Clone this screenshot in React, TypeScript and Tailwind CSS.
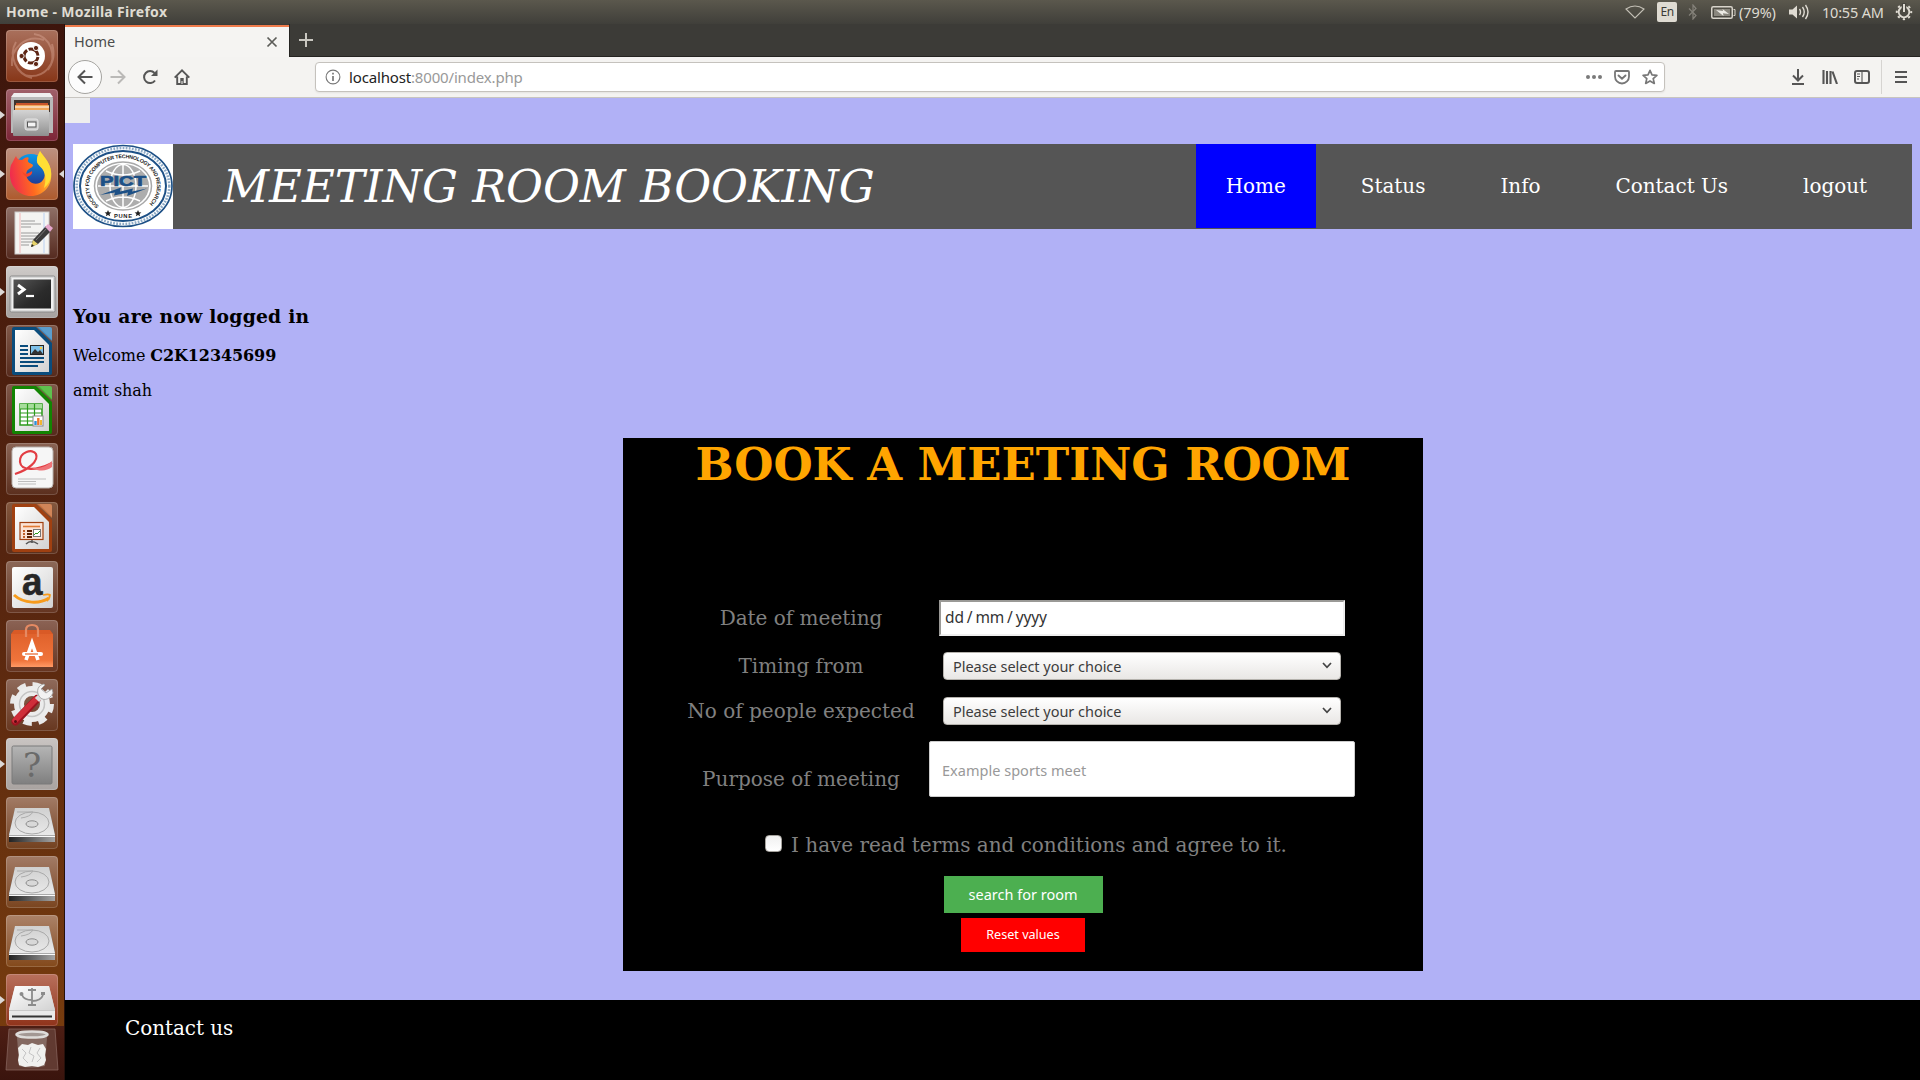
import React from "react";

const serif = "font-['DejaVu_Serif',serif]";
const sans = "font-['Noto_Sans',sans-serif]";

/* ---------- launcher artwork ---------- */

function UbuntuArt() {
  return (
    <g>
      <path d="M6 36C4 18 20 4 38 10M46 14C52 34 38 50 18 45M10 12C2 26 10 44 26 48M42 40C52 26 44 6 28 4" stroke="#d9a795" strokeWidth="2" fill="none" opacity=".45" />
      <circle cx="25" cy="26" r="14" fill="#fff" />
      <circle cx="25" cy="26" r="7" fill="none" stroke="#5e2514" strokeWidth="3" strokeDasharray="13 1.660" strokeDashoffset="-1" />
      <circle cx="15.600" cy="26" r="2.600" fill="#5e2514" stroke="#fff" strokeWidth=".9" />
      <circle cx="30" cy="18" r="2.600" fill="#5e2514" stroke="#fff" strokeWidth=".9" />
      <circle cx="30" cy="34" r="2.600" fill="#5e2514" stroke="#fff" strokeWidth=".9" />
    </g>
  );
}

function FilesArt() {
  return (
    <g>
      <path d="M5 9l3-5h36l3 5v35H5z" fill="#b9b9b9" />
      <path d="M5 8l3-4h36l3 4z" fill="#efefef" />
      <rect x="8" y="11" width="36" height="12" fill="#40342f" />
      <path d="M10 14h32v3H10z" fill="#c9552b" />
      <path d="M9 16h34v6H9z" fill="#f0a75b" />
      <path d="M9 18h34" stroke="#fff" strokeWidth="1.200" />
      <rect x="7" y="21" width="36" height="26" rx="1" fill="url(#steel)" />
      <rect x="19" y="30" width="13" height="11" rx="2" fill="#c9c9c9" stroke="#e5e5e5" />
      <rect x="21.500" y="33" width="8.500" height="5" fill="#f4f4f4" stroke="#555" />
    </g>
  );
}

function FirefoxArt() {
  return (
    <g>
      <circle cx="25" cy="23" r="17" fill="url(#ffblue)" />
      <path d="M5 17C7 14 8 11 10 8C11 11 13 12 16 12C21 8 24 9 22 12C21 15 25 15 27 17C27 20 23 20 21 23C19 27 21 32 26 35C34 38 41 31 38 23C36 18 31 18 31 13C31 8 33 5 34 3C37 8 44 14 45 24C47 38 37 48 25 48C13 48 4 38 4 27C4 23 4 20 5 17Z" fill="url(#fffire)" />
      <path d="M34 3C37 8 44 14 45 23C46 30 43 36 38 40C40 33 40 27 37 22C34 17 30 16 31 11C31 8 33 5 34 3Z" fill="#ffdf35" />
      <path d="M16 23c3 5 7 2 10 0c1 3-2 5-5 6c-3-1-4-3-5-6z" fill="#f5452b" />
    </g>
  );
}

function EditorArt() {
  return (
    <g>
      <rect x="9" y="5" width="34" height="42" fill="#f4f4f2" stroke="#ccc" />
      <path d="M14 6v40" stroke="#f4a9a9" strokeWidth=".8" />
      <path d="M38 6v40" stroke="#a9c8f4" strokeWidth=".8" />
      <path d="M15 14h14M15 17h20M15 20h10M15 26h18M15 29h18M15 32h14M15 35h12M15 38h8" stroke="#9a9a9a" />
      <path d="M25 40l2-7 13-14 5 5-13 13z" fill="#3b3b3b" />
      <path d="M25 40l2-7 5 4z" fill="#e6d36a" />
      <path d="M25 40l1-3 2 2z" fill="#222" />
      <path d="M39 20l3-3 5 4-3 4z" fill="#e5a6cc" />
      <path d="M30 33l11-12" stroke="#777" />
    </g>
  );
}

function TerminalArt() {
  return (
    <g>
      <rect x="4" y="10" width="45" height="36" rx="1.500" fill="#d9d9d9" stroke="#8a8a8a" />
      <rect x="6" y="12" width="41" height="32" fill="#f1f1f1" />
      <rect x="7.500" y="13.500" width="37.500" height="29" fill="url(#term)" />
      <path d="M12 19l6 4.500-6 4.500" stroke="#fff" strokeWidth="3" fill="none" />
      <path d="M20 30h8" stroke="#fff" strokeWidth="2.200" />
    </g>
  );
}

function DocShape({ color, fold, children }: { color: string; fold: string; children: React.ReactNode }) {
  return (
    <g>
      <path d="M8 2H30L46 18V48Q46 50 44 50H8Q6 50 6 48V4Q6 2 8 2Z" fill={color} />
      <path d="M9 5H28L43 20V47H9Z" fill="url(#paper)" />
      <path d="M31 2H44Q46 2 46 4V16Z" fill={fold} />
      <path d="M33 2H44Q46 2 46 4V15Z" fill="#fff" opacity=".15" />
      {children}
    </g>
  );
}

function WriterArt() {
  return (
    <DocShape color="#0a4c7c" fold="#3f8cc4">
      <path d="M14 21h8M14 25h8M14 29h8M14 33h24M14 37h24M14 41h18" stroke="#0a4c7c" strokeWidth="1.800" />
      <rect x="24.500" y="20.500" width="13" height="9" fill="#7cc0ea" stroke="#222" />
      <path d="M25 29l4-5 3 3 2-2 3 4z" fill="#333" />
      <circle cx="35" cy="23" r="1.300" fill="#f6c945" />
    </DocShape>
  );
}

function CalcArt() {
  return (
    <DocShape color="#128402" fold="#43b62f">
      <rect x="14" y="20" width="22" height="21" fill="#fff" stroke="#2b9a1b" strokeWidth="1.500" />
      <rect x="14" y="20" width="22" height="5" fill="#a6dd9b" />
      <path d="M14 25h22M14 29h22M14 33h22M14 37h22M21.500 20v21M28.500 20v21" stroke="#2b9a1b" strokeWidth="1.200" />
      <rect x="27" y="32" width="10" height="10" fill="#fff" stroke="#888" />
      <path d="M29.500 41v-4" stroke="#2d8fd8" strokeWidth="2.400" />
      <path d="M32.300 41v-7" stroke="#ee7429" strokeWidth="2.400" />
      <path d="M35 41v-5" stroke="#f2b632" strokeWidth="2" />
    </DocShape>
  );
}

function PdfArt() {
  return (
    <g>
      <rect x="6" y="4" width="41" height="41" rx="4" fill="#f6f6f6" stroke="#b9b2ae" />
      <path d="M9 31C22 27 33 18 30 11C27 5 13 9 14 19C15 28 30 28 46 20" stroke="#e23d43" strokeWidth="2.200" fill="none" />
      <path d="M26 25C36 26 42 22 46 18V24C41 28 34 29 26 25Z" fill="#ef7478" />
      <path d="M12 36h28M12 38.500h18M12 41h18" stroke="#bdbdbd" strokeWidth="1.200" />
    </g>
  );
}

function ImpressArt() {
  return (
    <DocShape color="#a04011" fold="#c8703c">
      <rect x="14" y="20.500" width="23" height="17" fill="#fbe3d6" stroke="#a04011" strokeWidth="1.200" />
      <path d="M17 24.500h17" stroke="#e07a35" strokeWidth="1.600" />
      <path d="M17 29h2M17 32h2M17 35h2" stroke="#c0602a" strokeWidth="2" />
      <path d="M21 29h5M21 32h5M21 35h5" stroke="#5c2205" strokeWidth="2" />
      <rect x="27.500" y="27.500" width="7" height="7" fill="#fff" stroke="#777" />
      <path d="M28 33l2-2 1 1 3-3" stroke="#2b9a1b" fill="none" />
      <path d="M20 42q5-5 12 0M26 38v3" stroke="#555" strokeWidth="1.500" fill="none" />
    </DocShape>
  );
}

function AmazonArt() {
  return (
    <g>
      <rect x="6" y="6" width="41" height="41" rx="2" fill="url(#paper)" />
      <text x="16" y="34" fontFamily="Liberation Sans" fontWeight="700" fontSize="39" textLength="20.500" lengthAdjust="spacingAndGlyphs" fill="#262626" stroke="#262626" strokeWidth=".6">a</text>
      <path d="M8 34C18 43 34 43 43 37" stroke="#f79b1c" strokeWidth="3" fill="none" />
      <path d="M37 34c4-1 6-1 7 0c0 2-1 4-3 6" stroke="#f79b1c" strokeWidth="1.800" fill="none" />
    </g>
  );
}

function SoftwareArt() {
  return (
    <g>
      <path d="M5 14h42v33H5z" fill="url(#bag)" />
      <path d="M5 14l3-4h36l3 4z" fill="#d95a26" />
      <path d="M20 17V10q0-5 6-5t6 5v7" stroke="#e58a63" strokeWidth="2.200" fill="none" />
      <path d="M20 40l6-17 6 17" stroke="#fff" strokeWidth="3.600" fill="none" />
      <path d="M18 34h17" stroke="#fff" strokeWidth="4" strokeLinecap="round" />
      <path d="M19 34h13" stroke="#e7632b" strokeWidth="1.200" />
    </g>
  );
}

function SettingsArt() {
  return (
    <g>
      <circle cx="26" cy="25" r="19.500" fill="none" stroke="#e9e9e9" strokeWidth="5" strokeDasharray="8.500 6.810" />
      <circle cx="26" cy="25" r="13" fill="none" stroke="#ececec" strokeWidth="10" />
      <circle cx="26" cy="25" r="12.500" fill="none" stroke="#c4c4c4" strokeWidth="1.500" />
      <path d="M9.500 42.500L31 20" stroke="#9c1420" strokeWidth="8" strokeLinecap="round" />
      <path d="M9 41.500L30 20" stroke="#cf2e3a" strokeWidth="5.500" strokeLinecap="round" />
      <path d="M31 21l5-5" stroke="#dcdcdc" strokeWidth="6" />
      <path d="M38 5c-6 1-8 7-5 12s10 5 14-3l-1-4-6 4-5-4 4-4z" fill="#f2f2f2" stroke="#9b9b9b" strokeWidth=".8" />
      <circle cx="9.500" cy="42.500" r="1.500" fill="#5c0a12" />
    </g>
  );
}

function UnknownArt() {
  return (
    <g>
      <rect x="6" y="8" width="40" height="38" rx="1.500" fill="url(#gray)" stroke="#7a7a7a" />
      <text x="26" y="39" textAnchor="middle" fontFamily="DejaVu Serif" fontSize="34" fill="#6a6a6a">?</text>
    </g>
  );
}

function DiskArt() {
  return (
    <g>
      <path d="M9 12H43L49 37V45H3V37Z" fill="#5a5a5a" />
      <path d="M9 11H43L49 38H3Z" fill="url(#disk)" />
      <path d="M3 38.500H49V40H3Z" fill="#fafafa" />
      <path d="M3 40H49V45H3Z" fill="url(#edge)" />
      <ellipse cx="26" cy="26" rx="17" ry="11" fill="none" stroke="#a9a9a9" />
      <ellipse cx="26" cy="27" rx="6" ry="3.200" fill="#d8d8d8" stroke="#8c8c8c" />
      <path d="M11 15h16q-3 5-12 6" stroke="#adadad" fill="none" />
    </g>
  );
}

function UsbArt() {
  return (
    <g>
      <path d="M9 12H43L49 36V46H3V36Z" fill="#c9c9c9" />
      <path d="M9 12H43L49 36H3Z" fill="url(#paper)" />
      <path d="M3 37H49V46H3Z" fill="#e9e9e9" />
      <path d="M6 41.500H46V43.500H6Z" fill="#333" />
      <path d="M26 14v17M26 26q-8 0-10-5M26 27q9 0 11-6M22 16h8M22 31h8" stroke="#8b8b8b" strokeWidth="1.800" fill="none" />
      <circle cx="15.500" cy="20" r="2" fill="#8b8b8b" />
      <rect x="35" y="18" width="4" height="3" fill="#8b8b8b" />
    </g>
  );
}

const launcher: { art: () => React.JSX.Element; tint: string; mark?: "left" | "both" }[] = [
  { art: UbuntuArt, tint: "bg-linear-to-b from-[#a9705c] to-[#873617]" },
  { art: FilesArt, tint: "bg-linear-to-b from-[#a0616a] to-[#7c2437]", mark: "left" },
  { art: FirefoxArt, tint: "bg-linear-to-b from-[#bd9180] to-[#ae5a2c]", mark: "both" },
  { art: EditorArt, tint: "bg-linear-to-b from-[#8f7068] to-[#552a1f]" },
  { art: TerminalArt, tint: "bg-linear-to-b from-[#cfcbc9] to-[#a5a19f]", mark: "left" },
  { art: WriterArt, tint: "bg-linear-to-b from-[#80594a] to-[#562a1c]" },
  { art: CalcArt, tint: "bg-linear-to-b from-[#80594a] to-[#562a1c]" },
  { art: PdfArt, tint: "bg-linear-to-b from-[#8a6455] to-[#5b2f1e]" },
  { art: ImpressArt, tint: "bg-linear-to-b from-[#84583f] to-[#5c2f1b]" },
  { art: AmazonArt, tint: "bg-linear-to-b from-[#8c6858] to-[#653521]" },
  { art: SoftwareArt, tint: "bg-linear-to-b from-[#8b6355] to-[#663521]" },
  { art: SettingsArt, tint: "bg-linear-to-b from-[#8f6a5b] to-[#67371f]" },
  { art: UnknownArt, tint: "bg-linear-to-b from-[#c9c4c2] to-[#a9a3a0]", mark: "left" },
  { art: DiskArt, tint: "bg-linear-to-b from-[#a27b66] to-[#73411f]" },
  { art: DiskArt, tint: "bg-linear-to-b from-[#a27b66] to-[#7a451f]" },
  { art: DiskArt, tint: "bg-linear-to-b from-[#ab8268] to-[#83491a]" },
  { art: UsbArt, tint: "bg-linear-to-b from-[#b8705c] to-[#90331a]", mark: "left" },
];

function Launcher() {
  return (
    <aside className="flex w-[65px] shrink-0 flex-col border-r border-[#26100b] bg-linear-to-b from-[#3d150c] via-[#55240f] to-[#7a3e0d] pt-[6px] pl-[6px]">
      <svg className="absolute h-0 w-0">
        <defs>
          <linearGradient id="steel" x2="0" y2="1"><stop stopColor="#d4d4d4" /><stop offset="1" stopColor="#8f8f8f" /></linearGradient>
          <linearGradient id="gray" x2="0" y2="1"><stop stopColor="#b5b5b5" /><stop offset="1" stopColor="#7f7f7f" /></linearGradient>
          <linearGradient id="term" x2="1" y2="1"><stop stopColor="#555" /><stop offset=".6" stopColor="#2b2b2b" /><stop offset="1" stopColor="#222" /></linearGradient>
          <linearGradient id="paper" x2="1" y2="1"><stop stopColor="#fff" /><stop offset="1" stopColor="#d2d2d2" /></linearGradient>
          <linearGradient id="disk" x2="0" y2="1"><stop stopColor="#d0d0d0" /><stop offset="1" stopColor="#e9e9e9" /></linearGradient>
          <linearGradient id="edge" x2="1" y2="0"><stop stopColor="#222" /><stop offset="1" stopColor="#a5a5a5" /></linearGradient>
          <linearGradient id="bag" x2="0" y2="1"><stop stopColor="#e0622c" /><stop offset=".8" stopColor="#f0743b" /><stop offset="1" stopColor="#ff9a66" /></linearGradient>
          <linearGradient id="ffblue" x2="0" y2="1"><stop stopColor="#0a9bea" /><stop offset="1" stopColor="#23308c" /></linearGradient>
          <linearGradient id="fffire" x1="0" y1=".6" x2="1" y2=".4"><stop stopColor="#ef2950" /><stop offset=".5" stopColor="#ff6a1f" /><stop offset="1" stopColor="#ffc52f" /></linearGradient>
        </defs>
      </svg>
      <div className="flex flex-col gap-[7px]">
        {launcher.map(({ art: Art, tint, mark }, i) => (
          <div key={i} className={`relative h-[52px] w-[52px] rounded-[4px] ${tint}`}>
            <svg viewBox="0 0 52 52" className="block h-[52px] w-[52px] overflow-visible"><Art /><rect x=".5" y=".5" width="51" height="51" rx="3.500" fill="none" stroke="#fff" strokeOpacity=".17" /></svg>
            {mark && <svg viewBox="0 0 5 8" className="absolute top-[22px] -left-[6px] h-[8px] w-[5px]"><path d="M0 0l5 4-5 4z" fill="#dcd8d6" /></svg>}
            {mark === "both" && <svg viewBox="0 0 5 8" className="absolute top-[22px] -right-[6px] h-[8px] w-[5px]"><path d="M5 0L0 4l5 4z" fill="#dcd8d6" /></svg>}
          </div>
        ))}
      </div>
      <div className="-ml-[6px] flex flex-1 items-start justify-center bg-linear-to-b from-[#4d1e14] to-[#3a140d] pt-[2px]">
        <svg viewBox="0 0 54 43" className="h-[43px] w-[54px]">
          <path d="M4 1H50L53 42H1Z" fill="#613a31" stroke="#8b6a63" strokeOpacity=".7" />
          <path d="M12 9H42L40 38Q27 41 14 38Z" fill="#9b8882" opacity=".6" />
          <path d="M13 20l4-4 6 1 4-2 6 2 5-1 3 5-1 6 1 5-2 5-6 2-6-1-7 1-6-2-1-5 1-5z" fill="#f0f0ee" />
          <path d="M17 21l4 4-3 5 5 5M26 19l-2 6 5 3-2 6M35 20l-3 5 4 5-4 4" stroke="#c4c4c4" fill="none" />
          <ellipse cx="27" cy="6.500" rx="15.500" ry="3" fill="#a39894" stroke="#dedbd9" strokeWidth="2.500" />
        </svg>
      </div>
    </aside>
  );
}

/* ---------- system panel ---------- */

function SystemBar() {
  return (
    <header className={`flex h-[24px] shrink-0 items-center bg-linear-to-b from-[#5b584d] to-[#403f3a] pl-[6px] text-[#dfdbd2] ${sans}`}>
      <span className="text-[14px] leading-[22px] font-bold tracking-[0.3px]">Home - Mozilla Firefox</span>
      <div className="ml-auto flex items-center text-[14.500px]">
        <svg viewBox="0 0 20 14" className="mr-[12px] h-[14px] w-[20px]"><path d="M1 4Q10-2 19 4L10 13Z" fill="none" stroke="#c4c0b6" strokeWidth="1.100" /></svg>
        <span className="mr-[11px] flex h-[20px] w-[20px] items-center justify-center rounded-[2px] bg-[#dfdbd2] text-[12px] tracking-[-0.5px] text-[#3c3b37]">En</span>
        <svg viewBox="0 0 10 16" className="mr-[13px] h-[16px] w-[10px]"><path d="M1 4.500l7 7L5 15V1l3 3.500-7 7" fill="none" stroke="#85827a" strokeWidth="1.200" /></svg>
        <svg viewBox="0 0 25 13" className="mr-[3px] h-[13px] w-[25px]">
          <rect x=".75" y=".75" width="20.500" height="11.500" rx="1.500" fill="none" stroke="#d8d4cb" strokeWidth="1.500" />
          <rect x="3" y="3" width="16" height="7" fill="#8a877e" />
          <path d="M22.500 3.500h1.500v6h-1.500" fill="none" stroke="#d8d4cb" />
          <path d="M5 4l7 1-.5-2L18 8l-6-.7.500 2.700z" fill="#eceae4" />
        </svg>
        <span className="mr-[10px] w-[40px] leading-[20px] tracking-[-0.1px] whitespace-nowrap">(79%)</span>
        <svg viewBox="0 0 21 16" className="mr-[12px] h-[16px] w-[21px]">
          <path d="M0 5.500h3.500L8 1.500v13L3.500 10.500H0z" fill="#dfdbd2" />
          <path d="M10.500 5q2 3 0 6M13.500 3q3.500 5 0 10M16.500 1q5 7 0 14" fill="none" stroke="#dfdbd2" strokeWidth="1.400" />
        </svg>
        <span className="mr-[11px] w-[62px] leading-[20px] tracking-[-0.2px] whitespace-nowrap">10:55 AM</span>
        <svg viewBox="0 0 18 18" className="mr-[7px] h-[18px] w-[18px]">
          <circle cx="9" cy="9" r="7.200" fill="none" stroke="#dfdbd2" strokeWidth="2" strokeDasharray="2.300 3.355" strokeDashoffset="1.150" />
          <circle cx="9" cy="9" r="5.300" fill="none" stroke="#dfdbd2" strokeWidth="1.800" />
          <path d="M9 0v9" stroke="#48463f" strokeWidth="4.500" />
          <path d="M9 1v8" stroke="#dfdbd2" strokeWidth="2" />
        </svg>
      </div>
    </header>
  );
}

/* ---------- browser chrome ---------- */

function TabStrip() {
  return (
    <div className={`flex h-[33px] shrink-0 items-stretch bg-[#3c3b37] ${sans}`}>
      <div className="mt-px flex w-[224px] items-center border-t-2 border-[#ef7b4b] bg-[#f5f4f2] pr-[11px] pb-[2px] pl-[9px]">
        <span className="-mt-px text-[14.500px] leading-[20px] text-[#4c4c4c]">Home</span>
        <svg viewBox="0 0 12 12" className="mt-[2px] ml-auto h-[12px] w-[12px]"><path d="M1.500 1.500l9 9M10.500 1.500l-9 9" stroke="#5c5c58" strokeWidth="1.700" /></svg>
      </div>
      <div className="flex flex-1 items-center border-b border-l border-[#252421] pl-[9px]">
        <svg viewBox="0 0 14 14" className="h-[14px] w-[14px]"><path d="M7 0v14M0 7h14" stroke="#c9c7c0" strokeWidth="2" /></svg>
      </div>
    </div>
  );
}

function Toolbar() {
  return (
    <div className={`flex h-[41px] shrink-0 items-center border-b border-[#c8c5c0] bg-[#f4f3f1] pl-[3px] ${sans}`}>
      <div className="flex h-[34px] w-[34px] items-center justify-center rounded-full border border-[#a5a4a0] bg-[#fcfcfc]">
        <svg viewBox="0 0 16 16" className="h-[16px] w-[16px]"><path d="M15.500 8H1.500M8 1.500L1.500 8 8 14.500" fill="none" stroke="#555" strokeWidth="2" /></svg>
      </div>
      <svg viewBox="0 0 16 16" className="ml-[8px] h-[16px] w-[16px]"><path d="M.5 8h14M8 1.500L14.500 8 8 14.500" fill="none" stroke="#bab9b7" strokeWidth="2" /></svg>
      <svg viewBox="0 0 16 16" className="ml-[16px] h-[16px] w-[16px]"><path d="M13 11.500A6 6 0 1 1 12.500 4" fill="none" stroke="#555" strokeWidth="2" /><path d="M15.500.5V7H9z" fill="#555" /></svg>
      <svg viewBox="0 0 16 16" className="ml-[16px] h-[16px] w-[16px]"><path d="M.7 8.700L8 1.400l7.300 7.300M3.200 7.500v7.500h9.600V7.500" fill="none" stroke="#555" strokeWidth="1.900" /><path d="M6.300 14.500V9h3.400v5.500" fill="#555" /><path d="M8 12v3" stroke="#f4f3f1" /></svg>
      <div className="ml-[125px] flex h-[30px] w-[1350px] items-center rounded-[4px] border border-[#c5c2bd] bg-white pl-[9px] shadow-[0_1px_2px_#0001]">
        <svg viewBox="0 0 16 16" className="h-[16px] w-[16px]"><circle cx="8" cy="8" r="6.900" fill="none" stroke="#777" strokeWidth="1.100" /><path d="M8 7v5M8 3.700v1.800" stroke="#777" strokeWidth="1.700" /></svg>
        <span className="ml-[8px] text-[15px] leading-[22px] tracking-[-0.16px] text-[#999]"><span className="text-[#222]">localhost</span>:8000/index.php</span>
        <svg viewBox="0 0 16 4" className="ml-auto h-[4px] w-[16px]"><circle cx="2" cy="2" r="2" fill="#7a7a7a" /><circle cx="8" cy="2" r="2" fill="#7a7a7a" /><circle cx="14" cy="2" r="2" fill="#7a7a7a" /></svg>
        <svg viewBox="0 0 16 15" className="ml-[12px] h-[15px] w-[16px]"><path d="M2 1h12q1 0 1 1v4.500a7 7 0 0 1-14 0V2q0-1 1-1z" fill="none" stroke="#777" strokeWidth="1.800" /><path d="M4.500 5.500L8 8.800l3.500-3.300" fill="none" stroke="#777" strokeWidth="1.900" strokeLinecap="round" /></svg>
        <svg viewBox="0 0 16 16" className="mr-[6px] ml-[12px] h-[16px] w-[16px]"><path d="M8 1.300l2 4.500 4.900.5-3.700 3.300 1.100 4.800L8 11.900l-4.300 2.500 1.100-4.800L1.100 6.300 6 5.800z" fill="none" stroke="#777" strokeWidth="1.700" strokeLinejoin="round" /></svg>
      </div>
      <svg viewBox="0 0 14 16" className="ml-[126px] h-[16px] w-[14px]"><path d="M7 0v11M2 6.500l5 5 5-5M1 15h12" fill="none" stroke="#555" strokeWidth="2" /></svg>
      <svg viewBox="0 0 16 14" className="ml-[17px] h-[14px] w-[16px]"><path d="M1.500 0v14M5 1v13M8.500 1v13M10.500 1.500L15 14" fill="none" stroke="#555" strokeWidth="2.100" /></svg>
      <svg viewBox="0 0 16 14" className="ml-[16px] h-[14px] w-[16px]"><rect x="1" y="1" width="14" height="12" rx="2" fill="none" stroke="#555" strokeWidth="2" /><path d="M8 1v12M3 4h3M3 6.500h3M3 9h2" stroke="#555" strokeWidth="1.100" /></svg>
      <div className="ml-[11px] h-[34px] w-px bg-[#d6d4d1]" />
      <svg viewBox="0 0 12 12" className="ml-[13px] h-[12px] w-[12px]"><path d="M0 1h12M0 6h12M0 11h12" stroke="#555" strokeWidth="2" /></svg>
    </div>
  );
}

/* ---------- web page ---------- */

function PictLogo() {
  return (
    <svg viewBox="0 0 100 85" className="block h-[85px] w-[100px] overflow-visible">
      <defs>
        <path id="ring" d="M26 62A34 28 0 1 1 74 62" />
      </defs>
      <rect width="100" height="85" fill="#fff" />
      <ellipse cx="50" cy="42" rx="49" ry="40.500" fill="#fff" stroke="#1d5086" strokeWidth="1.700" />
      <ellipse cx="50" cy="42" rx="46.300" ry="38" fill="none" stroke="#8fabc6" strokeWidth="2.600" strokeDasharray="1.800 1.300" />
      <ellipse cx="50" cy="42" rx="43" ry="35" fill="#fff" stroke="#1d5086" strokeWidth="2" />
      <ellipse cx="50" cy="42" rx="28.500" ry="24" fill="#fff" stroke="#a8a8a8" strokeWidth="1.500" />
      <ellipse cx="50" cy="42" rx="26" ry="22" fill="#adadad" />
      <path d="M50 20v44M25 42h50M33 27q17 8 34 0M33 57q17-8 34 0" stroke="#fff" strokeWidth="1.500" fill="none" />
      <ellipse cx="50" cy="42" rx="13" ry="21.500" fill="none" stroke="#fff" strokeWidth="1.500" />
      <text fontFamily="Liberation Sans" fontWeight="700" fontSize="5.300" fill="#222" letterSpacing="-.25"><textPath href="#ring">SOCIETY FOR COMPUTER TECHNOLOGY AND RESEARCH</textPath></text>
      <text x="41" y="74" fontFamily="Liberation Sans" fontWeight="700" fontSize="5.800" fill="#222" textLength="18">PUNE</text>
      <path id="star" d="M35 66l1 2.300 2.400.1-1.900 1.500.7 2.400-2.200-1.300-2.200 1.300.7-2.400-1.900-1.500 2.400-.1z" fill="#222" />
      <use href="#star" x="30" />
      <text x="27" y="42" fontFamily="Liberation Sans" fontWeight="700" fontSize="15.500" fill="#1d5086" stroke="#1d5086" strokeWidth=".7" textLength="46" lengthAdjust="spacingAndGlyphs">PICT</text>
      <path d="M27 51L48 43.500L47 47.500L60 44.500L59 47.500L74 44.500L54 52L55 48.500L41 51.500L42 48.500Z" fill="#1d5086" />
    </svg>
  );
}

function SiteHeader() {
  const item = "flex h-[84px] items-center px-[30px] text-[20px] leading-[24px] text-white";
  return (
    <div className="flex h-[85px] items-start bg-[#555]">
      <PictLogo />
      <h1 className="ml-[50px] text-[45px] leading-[86px] whitespace-nowrap text-white italic">MEETING ROOM BOOKING</h1>
      <nav className="ml-auto flex gap-[15px] pr-[15px] tracking-[-0.04px]">
        <a className={`${item} bg-[#0000ff]`}>Home</a>
        <a className={item}>Status</a>
        <a className={item}>Info</a>
        <a className={item}>Contact Us</a>
        <a className={item}>logout</a>
      </nav>
    </div>
  );
}

function Select() {
  return (
    <div className={`flex h-[28px] w-[398px] items-center rounded-[4px] border border-[#b5b2ad] bg-linear-to-b from-white to-[#e9e7e5] pr-[8px] pl-[9px] text-[14.500px] text-[#3c3c3c] ${sans}`}>
      <span className="leading-[20px] tracking-[-0.03px]">Please select your choice</span>
      <svg viewBox="0 0 10 7" className="-mt-px ml-auto h-[7px] w-[10px]"><path d="M1 1l4 4.300L9 1" fill="none" stroke="#444" strokeWidth="1.700" /></svg>
    </div>
  );
}

function BookingForm() {
  return (
    <form className="mt-[38px] ml-[550px] flex h-[533px] w-[800px] flex-col items-center bg-black text-[20px] leading-[24px] text-[#808080]">
      <h2 className="pt-px text-[45px] leading-[52px] font-bold tracking-[-0.08px] whitespace-nowrap text-[#ffa500]">BOOK A MEETING ROOM</h2>
      <div className="mt-[109px] grid w-full grid-cols-[236px_434px] content-start items-center justify-items-center gap-x-[6px] pl-[60px]">
        <label className="whitespace-nowrap">Date of meeting</label>
        <div className={`flex h-[36px] w-[406px] items-center border-2 border-[#9a9996] border-r-[#eee] border-b-[#eee] bg-white pb-[2px] pl-[4px] text-[15.500px] tracking-[-0.1px] [word-spacing:-1px] text-[#333] ${sans}`}>dd / mm / yyyy</div>
        <label className="mt-[16px]">Timing from</label>
        <div className="mt-[16px]"><Select /></div>
        <label className="mt-[17px] whitespace-nowrap">No of people expected</label>
        <div className="mt-[17px]"><Select /></div>
        <label className="mt-[36px]">Purpose of meeting</label>
        <div className={`mt-[16px] flex h-[56px] w-[426px] items-center rounded-[2px] border border-[#ccc] bg-white pt-px pl-[12px] text-[14.500px] tracking-[0.02px] text-[#999] ${sans}`}>Example sports meet</div>
      </div>
      <div className="mt-[36px] flex items-center gap-[9px] pl-[6px]">
        <span className="-mt-[3px] h-[17px] w-[17px] rounded-[4px] border border-[#a5a29d] bg-linear-to-b from-[#f0f0f0] to-white" />
        <span className="tracking-[-0.02px] whitespace-nowrap">I have read terms and conditions and agree to it.</span>
      </div>
      <button type="button" className={`mt-[19px] h-[37px] w-[159px] bg-[#4caf50] pb-px text-[14.500px] leading-[20px] text-white ${sans}`}>search for room</button>
      <button type="button" className={`mt-[5px] h-[34px] w-[124px] bg-[#ff0000] text-[12.600px] leading-[18px] text-white ${sans}`}>Reset values</button>
    </form>
  );
}

export default function App() {
  return (
    <div className="flex h-[1080px] w-[1920px] flex-col overflow-hidden">
      <SystemBar />
      <div className="flex min-h-0 flex-1">
        <Launcher />
        <div className="flex min-w-0 flex-1 flex-col">
          <TabStrip />
          <Toolbar />
          <main className={`flex min-h-0 flex-1 flex-col bg-[#b1b1f6] text-black ${serif}`}>
            <div className="h-[25px] w-[25px] shrink-0 bg-[#eee]" />
            <div className="mt-[21px] flex-1 px-[8px]">
              <SiteHeader />
              <h3 className="mt-[76px] text-[18.720px] leading-[22px] font-bold tracking-[0.24px]">You are now logged in</h3>
              <p className="mt-[19px] text-[16px] leading-[19px] tracking-[-0.09px]">Welcome <strong>C2K12345699</strong></p>
              <p className="mt-[16px] text-[16px] leading-[19px] tracking-[-0.09px]">amit shah</p>
              <BookingForm />
            </div>
            <footer className="h-[80px] shrink-0 bg-black pt-[16px] pl-[60px] text-[20px] leading-[24px] tracking-[-0.08px] text-white">Contact us</footer>
          </main>
        </div>
      </div>
    </div>
  );
}
